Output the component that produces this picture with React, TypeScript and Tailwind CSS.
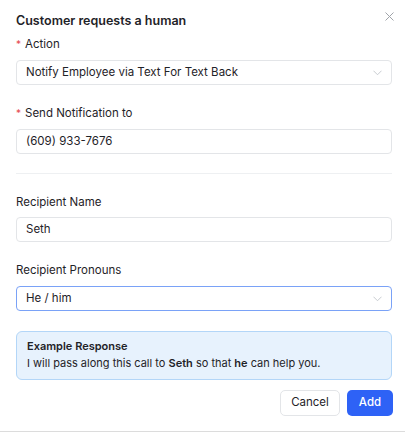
import React from "react";

function Chevron() {
  return (
    <svg width="9" height="6" viewBox="0 0 9 6" fill="none" className="text-[#c2c6cc]">
      <path d="M0.75 1L4.5 4.75L8.25 1" stroke="currentColor" strokeWidth="0.9" strokeLinecap="round" strokeLinejoin="round" />
    </svg>
  );
}

function Label({ children, required }: { children: React.ReactNode; required?: boolean }) {
  return (
    <div className="h-[16px] flex items-center text-[11.5px] leading-[16px] text-[#1f2328]">
      {required && <span className="text-[#e5484d] mr-[4px] text-[10px] leading-[16px]">*</span>}
      <span>{children}</span>
    </div>
  );
}

export default function App() {
  return (
    <div className="w-[405px] h-[432px] bg-white border-b border-[#dcdcdc] overflow-hidden" style={{ fontFamily: "Inter, 'Noto Sans', sans-serif" }}>
      <div className="pl-[16px] pr-[13px] pt-[12px]">
        <div className="flex items-start justify-between">
          <div className="text-[12.5px] leading-[18px] font-semibold text-[#1f2328]">Customer requests a human</div>
          <svg width="9" height="9" viewBox="0 0 9 9" className="mt-[0px] mr-[-2px] text-[#a0a4aa]">
            <path d="M0.5 0.5L8.5 8.5M8.5 0.5L0.5 8.5" stroke="currentColor" strokeWidth="1" />
          </svg>
        </div>

        <div className="mt-[6px]">
          <Label required>Action</Label>
        </div>
        <div className="mt-[8px] h-[25px] border border-[#e3e5e8] rounded-[4px] flex items-center justify-between pl-[9px] pr-[9px] text-[11.5px] text-[#1f2328]">
          <span>Notify Employee via Text For Text Back</span>
          <Chevron />
        </div>

        <div className="mt-[20px]">
          <Label required>Send Notification to</Label>
        </div>
        <div className="mt-[8px] h-[25px] border border-[#e3e5e8] rounded-[4px] flex items-center pl-[9px] text-[11.5px] text-[#1f2328]">
          (609) 933-7676
        </div>

        <div className="mt-[19px] h-px bg-[#eef0f2]" />

        <div className="mt-[20px]">
          <Label>Recipient Name</Label>
        </div>
        <div className="mt-[7px] h-[25px] border border-[#e3e5e8] rounded-[4px] flex items-center pl-[9px] text-[11.5px] text-[#1f2328]">
          Seth
        </div>

        <div className="mt-[20px]">
          <Label>Recipient Pronouns</Label>
        </div>
        <div className="mt-[8px] h-[25px] border border-[#7aa2f7] rounded-[4px] flex items-center justify-between pl-[9px] pr-[9px] text-[11.5px] text-[#1f2328]">
          <span>He / him</span>
          <Chevron />
        </div>

        <div className="mt-[20px] h-[49px] bg-[#e7f2fd] border border-[#b3d6f8] rounded-[6px] px-[10px] pt-[6px] text-[11px] leading-[17px] text-[#1f2328]">
          <div className="font-semibold">Example Response</div>
          <div>
            I will pass along this call to <b className="font-semibold">Seth</b> so that <b className="font-semibold">he</b> can help you.
          </div>
        </div>

        <div className="mt-[10px] flex justify-end gap-[7px] mr-[-1px]">
          <button className="h-[26px] w-[60px] border border-[#e3e5e8] rounded-[5px] bg-white text-[11.5px] text-[#1f2328]">Cancel</button>
          <button className="h-[26px] w-[46px] rounded-[5px] bg-[#2e62f6] text-[11.5px] text-white font-medium">Add</button>
        </div>
      </div>
    </div>
  );
}
